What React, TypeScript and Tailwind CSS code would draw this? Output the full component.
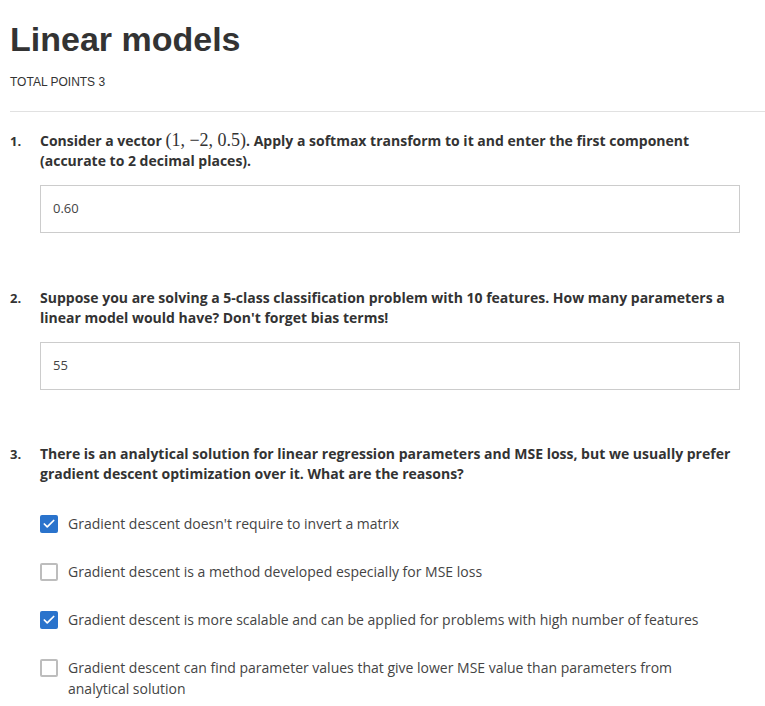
import { Check } from 'lucide-react';

const body = { fontFamily: '"Open Sans", "Liberation Sans", sans-serif' };

function Question({ n, children }: { n: number; children: React.ReactNode }) {
  return (
    <div className="flex text-[14px] leading-[20px] font-bold text-[#333]">
      <span className="w-[30px] shrink-0 text-[13px]">{n}.</span>
      <p className="pr-8">{children}</p>
    </div>
  );
}

function Answer({ value }: { value: string }) {
  return (
    <div className="ml-[30px] mr-[25px] mt-[14px] h-[48px] border border-[#ccc] flex items-center px-[12px] text-[13px] text-[#444]">
      {value}
    </div>
  );
}

function Option({ checked, children }: { checked: boolean; children: React.ReactNode }) {
  return (
    <div className="flex items-start ml-[30px] text-[14px] leading-[21px] text-[#444]">
      {checked ? (
        <span className="mt-[2px] w-[18px] h-[18px] rounded-[2px] bg-[#2a73cc] flex items-center justify-center shrink-0">
          <Check className="w-[14px] h-[14px] text-white" strokeWidth={3} />
        </span>
      ) : (
        <span className="mt-[2px] w-[18px] h-[18px] rounded-[2px] border-2 border-[#bdbdbd] bg-white shrink-0" />
      )}
      <span className="ml-[10px] pr-[40px]">{children}</span>
    </div>
  );
}

export default function App() {
  return (
    <div className="bg-white min-h-[706px] pl-[10px] pt-[19px]" style={body}>
      <h1
        className="text-[34px] leading-[40px] font-bold text-[#333]"
        style={{ fontFamily: '"Liberation Sans", Arial, sans-serif' }}
      >
        Linear models
      </h1>
      <div
        className="mt-[14px] text-[12px] text-[#333]"
        style={{ fontFamily: '"Liberation Sans", Arial, sans-serif' }}
      >
        TOTAL POINTS 3
      </div>
      <div className="mt-[20px] border-t border-[#e1e1e1]" />

      <div className="mt-[19px]">
        <Question n={1}>
          Consider a vector{' '}
          <span
            className="font-normal text-[18px] leading-[14px]"
            style={{ fontFamily: '"Liberation Serif", "DejaVu Serif", serif' }}
          >
            (1, −2, 0.5)
          </span>
          . Apply a softmax transform to it and enter the first component (accurate to 2 decimal places).
        </Question>
        <Answer value="0.60" />
      </div>

      <div className="mt-[55px]">
        <Question n={2}>
          Suppose you are solving a 5-class classification problem with 10 features. How many parameters a linear
          model would have? Don't forget bias terms!
        </Question>
        <Answer value="55" />
      </div>

      <div className="mt-[54px]">
        <Question n={3}>
          There is an analytical solution for linear regression parameters and MSE loss, but we usually prefer
          gradient descent optimization over it. What are the reasons?
        </Question>
        <div className="mt-[29px] flex flex-col gap-[27px]">
          <Option checked>Gradient descent doesn't require to invert a matrix</Option>
          <Option checked={false}>Gradient descent is a method developed especially for MSE loss</Option>
          <Option checked>Gradient descent is more scalable and can be applied for problems with high number of features</Option>
          <Option checked={false}>
            Gradient descent can find parameter values that give lower MSE value than parameters from analytical
            solution
          </Option>
        </div>
      </div>
    </div>
  );
}
